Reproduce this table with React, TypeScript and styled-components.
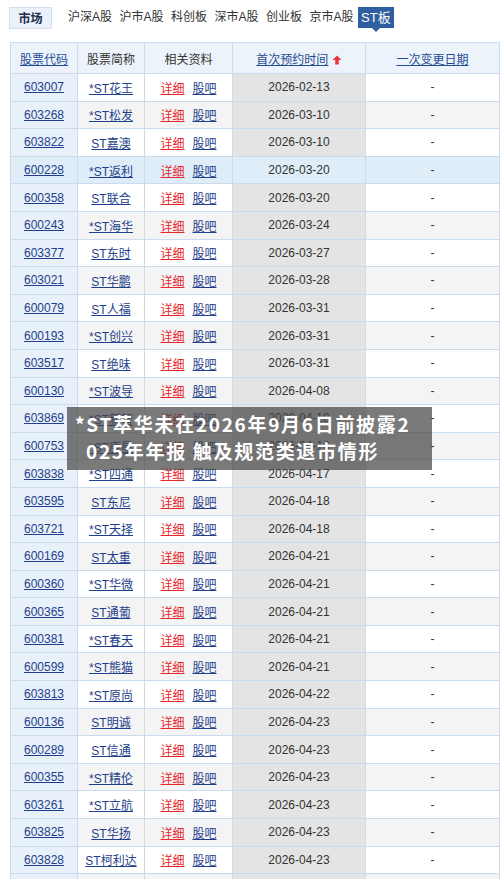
import styled, { createGlobalStyle } from 'styled-components'

const GlobalStyle = createGlobalStyle`
  body {
    margin: 0;
    background: #fff;
    font-family: "Liberation Sans", "Noto Sans CJK SC", sans-serif;
    font-size: 12px;
    color: #333;
  }
`

type Stock = { code: string; name: string; first: string; change?: string }

const stocks: Stock[] = [
  { code: '603007', name: '*ST花王', first: '2026-02-13' },
  { code: '603268', name: '*ST松发', first: '2026-03-10' },
  { code: '603822', name: 'ST嘉澳', first: '2026-03-10' },
  { code: '600228', name: '*ST返利', first: '2026-03-20' },
  { code: '600358', name: 'ST联合', first: '2026-03-20' },
  { code: '600243', name: '*ST海华', first: '2026-03-24' },
  { code: '603377', name: 'ST东时', first: '2026-03-27' },
  { code: '603021', name: 'ST华鹏', first: '2026-03-28' },
  { code: '600079', name: 'ST人福', first: '2026-03-31' },
  { code: '600193', name: '*ST创兴', first: '2026-03-31' },
  { code: '603517', name: 'ST绝味', first: '2026-03-31' },
  { code: '600130', name: '*ST波导', first: '2026-04-08' },
  { code: '603869', name: '*ST新智', first: '2026-04-10' },
  { code: '600753', name: '*ST庚星', first: '2026-04-16' },
  { code: '603838', name: '*ST四通', first: '2026-04-17' },
  { code: '603595', name: 'ST东尼', first: '2026-04-18' },
  { code: '603721', name: '*ST天择', first: '2026-04-18' },
  { code: '600169', name: 'ST太重', first: '2026-04-21' },
  { code: '600360', name: '*ST华微', first: '2026-04-21' },
  { code: '600365', name: 'ST通葡', first: '2026-04-21' },
  { code: '600381', name: '*ST春天', first: '2026-04-21' },
  { code: '600599', name: '*ST熊猫', first: '2026-04-21' },
  { code: '603813', name: '*ST原尚', first: '2026-04-22' },
  { code: '600136', name: 'ST明诚', first: '2026-04-23' },
  { code: '600289', name: 'ST信通', first: '2026-04-23' },
  { code: '600355', name: '*ST精伦', first: '2026-04-23' },
  { code: '603261', name: '*ST立航', first: '2026-04-23' },
  { code: '603825', name: 'ST华扬', first: '2026-04-23' },
  { code: '603828', name: 'ST柯利达', first: '2026-04-23' }
]

const markets = ['沪深A股', '沪市A股', '科创板', '深市A股', '创业板', '京市A股', 'ST板']

function SortUp() {
  return (
    <svg width='10' height='10' viewBox='0 0 10 10'>
      <path d='M5 0.5 L9.5 5 L6.8 5 L6.8 9.5 L3.2 9.5 L3.2 5 L0.5 5 Z' fill='#e8383d' />
    </svg>
  )
}

function App() {
  return (
    <Page>
      <GlobalStyle />
      <TabBar>
        <MarketLabel>市场</MarketLabel>
        {markets.map(m => (
          <MarketTab key={m} $active={m === 'ST板'}>
            {m}
          </MarketTab>
        ))}
      </TabBar>
      <Table>
        <colgroup>
          <col style={{ width: 67 }} />
          <col style={{ width: 67 }} />
          <col style={{ width: 88 }} />
          <col style={{ width: 133 }} />
          <col style={{ width: 134 }} />
        </colgroup>
        <thead>
          <tr>
            <HeadCell>
              <HeadLink>股票代码</HeadLink>
            </HeadCell>
            <HeadCell>股票简称</HeadCell>
            <HeadCell>相关资料</HeadCell>
            <HeadCell>
              <HeadLink>首次预约时间</HeadLink> <SortUp />
            </HeadCell>
            <HeadCell>
              <HeadLink>一次变更日期</HeadLink>
            </HeadCell>
          </tr>
        </thead>
        <tbody>
          {stocks.map((s, i) => (
            <Row key={s.code} $alt={i % 2 === 1} $hover={s.code === '600228'}>
              <Cell>
                <NavyLink>{s.code}</NavyLink>
              </Cell>
              <Cell>
                <NavyLink>{s.name}</NavyLink>
              </Cell>
              <Cell>
                <RedLink>详细</RedLink>
                <NavyLink>股吧</NavyLink>
              </Cell>
              <Cell>{s.first}</Cell>
              <Cell>{s.change || '-'}</Cell>
            </Row>
          ))}
          <Row $alt>
            <Cell />
            <Cell />
            <Cell />
            <Cell />
            <Cell />
          </Row>
        </tbody>
      </Table>
      <Headline>
        <HeadlineLine>*ST萃华未在2026年9月6日前披露2</HeadlineLine>
        <HeadlineLine $indent>025年年报 触及规范类退市情形</HeadlineLine>
      </Headline>
    </Page>
  )
}

const Page = styled.div`
  position: relative;
  width: 500px;
  height: 879px;
  overflow: hidden;
`

const TabBar = styled.div`
  display: flex;
  align-items: flex-start;
  padding: 7px 0 0 9px;
  height: 35px;
  box-sizing: border-box;
`

const MarketLabel = styled.div`
  width: 43px;
  height: 22px;
  line-height: 22px;
  box-sizing: border-box;
  text-align: center;
  font-weight: bold;
  color: #1d2f4d;
  background: #eaf1fa;
  border: 1px solid #d3e1ef;
  margin-right: 13px;
`

const MarketTab = styled.div<{ $active?: boolean }>`
  position: relative;
  height: 21px;
  line-height: 21px;
  padding: 0 3px;
  margin-right: 1.5px;
  color: ${p => (p.$active ? '#fff' : '#333')};
  background: ${p => (p.$active ? '#2f5f9e' : 'transparent')};
  font-size: ${p => (p.$active ? '13px' : '12px')};

  &::after {
    content: '';
    display: ${p => (p.$active ? 'block' : 'none')};
    position: absolute;
    left: 50%;
    bottom: -4px;
    margin-left: -4px;
    border-left: 4px solid transparent;
    border-right: 4px solid transparent;
    border-top: 4px solid #2f5f9e;
  }
`

const Table = styled.table`
  margin-left: 10px;
  width: 489px;
  table-layout: fixed;
  border-collapse: collapse;
  margin-top: 7px;
`

const HeadCell = styled.th`
  height: 30px;
  padding: 0;
  font-weight: normal;
  text-align: center;
  color: #333;
  background: #edf3fa;
  border: 1px solid #c9dbed;
  white-space: nowrap;

  svg {
    vertical-align: -1px;
  }
`

const HeadLink = styled.a`
  color: #1f4d96;
  text-decoration: underline;
`

const Row = styled.tr<{ $alt?: boolean; $hover?: boolean }>`
  height: 27.6px;
  background: ${p => (p.$hover ? '#deedf8' : p.$alt ? '#f4f4f4' : '#fff')};

  td:nth-child(1) {
    background: ${p => (p.$hover ? '#deedf8' : '#e8f0f9')};
  }

  td:nth-child(4) {
    background: ${p => (p.$hover ? '#deedf8' : '#e4e4e4')};
  }
`

const Cell = styled.td`
  padding: 0;
  text-align: center;
  border: 1px solid #c9dbed;
  white-space: nowrap;
  color: #333;
`

const NavyLink = styled.a`
  color: #1f3f8c;
  text-decoration: underline;
`

const RedLink = styled.a`
  color: #e8262b;
  text-decoration: underline;
  margin-right: 8px;
`

const Headline = styled.div`
  position: absolute;
  left: 67px;
  top: 407px;
  width: 365px;
  height: 63px;
  box-sizing: border-box;
  padding: 3px 0 0 8px;
  background: rgba(70, 70, 70, 0.72);
  color: #fff;
  font-family: "Noto Sans CJK SC", sans-serif;
  font-weight: bold;
  font-size: 19px;
  letter-spacing: 1.7px;
  line-height: 27px;
`

const HeadlineLine = styled.div<{ $indent?: boolean }>`
  white-space: nowrap;
  padding-left: ${p => (p.$indent ? '11px' : '0')};
`

export default App
